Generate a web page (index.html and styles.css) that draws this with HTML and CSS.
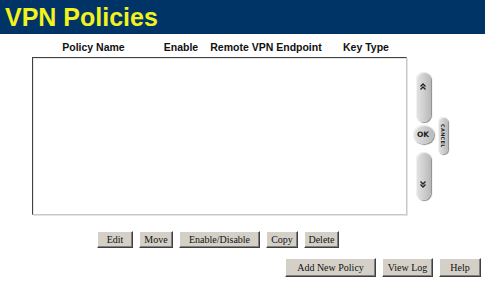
FILE: index.html
```html
<!DOCTYPE html>
<html lang="en">
<head>
    <meta charset="UTF-8">
    <title>VPN Policies</title>
    <link rel="stylesheet" href="styles.css">
</head>
<body>

<div class="header">
    <h1>VPN Policies</h1>
</div>

<!-- Column headings -->
<div class="cols">
    <span>Policy Name</span>
    <span>Enable</span>
    <span>Remote VPN Endpoint</span>
    <span>Key Type</span>
</div>

<div class="main">
    <div class="list"></div>

    <!-- Scroll / OK / Cancel controls -->
    <div class="side">
        <div class="side-col">
            <button class="pill up">
                <svg width="6" height="7" viewBox="0 0 6 7"><path d="M0.5 3.5 L3 1 L5.5 3.5 M0.5 6.5 L3 4 L5.5 6.5" fill="none" stroke="#222" stroke-width="1.3"/></svg>
            </button>
            <button class="round">OK</button>
            <button class="pill down">
                <svg width="6" height="7" viewBox="0 0 6 7"><path d="M0.5 0.5 L3 3 L5.5 0.5 M0.5 3.5 L3 6 L5.5 3.5" fill="none" stroke="#222" stroke-width="1.3"/></svg>
            </button>
        </div>
        <button class="cancel">CANCEL</button>
    </div>
</div>

<div class="actions">
    <button class="btn w-edit">Edit</button>
    <button class="btn w-move">Move</button>
    <button class="btn w-enable">Enable/Disable</button>
    <button class="btn w-copy">Copy</button>
    <button class="btn w-delete">Delete</button>
</div>

<div class="actions bottom">
    <button class="btn w-add">Add New Policy</button>
    <button class="btn w-log">View Log</button>
    <button class="btn w-help">Help</button>
</div>

</body>
</html>
```

FILE: styles.css
```css
body {
    margin: 0;
    width: 485px;
    height: 283px;
    background: #fff;
    font-family: "Liberation Sans", Arial, sans-serif;
    overflow: hidden;
}
.header {
    height: 34px;
    background-color: #003366;
    padding-left: 5px;
}
.header h1 {
    margin: 0;
    font-size: 25px;
    line-height: 35px;
    font-weight: bold;
    color: #f2f21c;
}
.cols {
    display: grid;
    grid-template-columns: 123px 52px 118px 82px;
    padding-left: 32px;
    margin-top: 6px;
    height: 17px;
    font-size: 10.5px;
    font-weight: bold;
    color: #111;
    text-align: center;
    line-height: 14px;
}
.main {
    display: flex;
    padding-left: 32px;
}
.list {
    width: 371px;
    height: 154px;
    border-top: 1px solid #404040;
    border-left: 1px solid #404040;
    border-right: 1px solid #c8c8c8;
    border-bottom: 1px solid #c8c8c8;
    box-shadow: inset 1px 1px 0 #e8e8e8, 1px 1px 0 #e4e4e4;
    padding: 1px;
}
.side {
    display: flex;
    align-items: flex-start;
    margin-left: 5px;
    padding-top: 15px;
}
.side-col {
    display: flex;
    flex-direction: column;
    align-items: center;
    width: 22px;
}
.side button {
    padding: 0;
    border: none;
    cursor: pointer;
    background: linear-gradient(90deg, #e4e4e4 0%, #d2d2d2 45%, #b8b8b8 100%);
    box-shadow: 1px 1px 1px #8a8a8a, inset 1px 1px 0 #f2f2f2;
    color: #222;
    font-family: "DejaVu Sans", sans-serif;
}
.pill {
    width: 15px;
    height: 50px;
    border-radius: 8px;
    display: flex;
    justify-content: center;
}
.pill.up {
    align-items: flex-start;
    padding-top: 11px !important;
}
.pill.down {
    height: 48px;
    margin-top: 8px;
    align-items: flex-end;
    padding-bottom: 12px !important;
}
.round {
    width: 21px;
    height: 19px;
    margin-top: 3px;
    border-radius: 50%;
    font-size: 7.5px;
    font-weight: bold;
}
.cancel {
    width: 10px;
    height: 37px;
    border-radius: 5px;
    margin-left: 4px;
    margin-top: 45px;
    writing-mode: vertical-rl;
    font-size: 5px;
    font-weight: bold;
    letter-spacing: 0.3px;
}
.actions {
    display: flex;
    gap: 6px;
    padding-left: 97px;
    margin-top: 16px;
}
.actions.bottom {
    justify-content: flex-end;
    padding-right: 4px;
    margin-top: 10px;
    gap: 6px;
}
.btn {
    height: 17px;
    padding: 0;
    background-color: #d4d0c8;
    border: 1px solid;
    border-color: #fff #404040 #404040 #fff;
    box-shadow: inset -1px -1px 0 #808080;
    font-family: "Liberation Serif", "Times New Roman", serif;
    font-size: 10px;
    color: #111;
    cursor: pointer;
}
.bottom .btn {
    height: 19px;
}
.w-edit { width: 36px; }
.w-move { width: 34px; }
.w-enable { width: 81px; }
.w-copy { width: 32px; }
.w-delete { width: 35px; }
.w-add { width: 91px; }
.w-log { width: 51px; }
.w-help { width: 42px; }
```
